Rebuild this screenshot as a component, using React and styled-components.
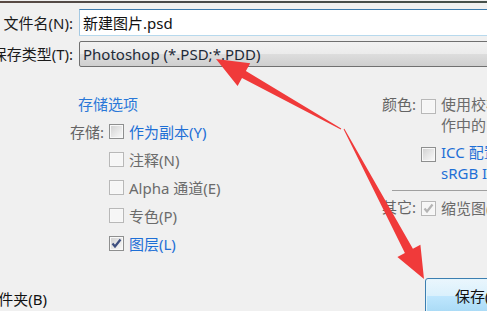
import React from 'react';
import styled, { createGlobalStyle } from 'styled-components';

const GlobalStyle = createGlobalStyle`
  html, body {
    margin: 0;
    padding: 0;
  }
  body {
    background: #f0f0f0;
    font-family: "Noto Sans", "Noto Sans CJK SC", sans-serif;
    font-size: 15px;
  }
`;

const Dialog = styled.div`
  position: relative;
  width: 487px;
  height: 311px;
  overflow: hidden;
  background: #f0f0f0;
  display: flex;
  flex-direction: column;
`;

const TopEdge = styled.div`
  height: 2px;
  margin-top: 1px;
  background: linear-gradient(to right, #5a4a44, #4a4a4a 30%, #46504a);
`;

const Fields = styled.div`
  display: flex;
  flex-direction: column;
  gap: 5px;
  margin-top: 6px;
`;

const FieldRow = styled.div`
  display: grid;
  grid-template-columns: 73px 420px;
  column-gap: 6px;
  align-items: center;
`;

const FieldLabel = styled.label`
  display: flex;
  justify-content: flex-end;
  white-space: nowrap;
  color: #1b1b1b;
  line-height: 20px;
`;

const TextBox = styled.div`
  box-sizing: border-box;
  height: 27px;
  padding: 0 3px;
  display: flex;
  align-items: center;
  background: #fff;
  border: 1px solid;
  border-color: #3d7bad #a4c9e3 #b7d9ed #a4c9e3;
  color: #111;
`;

const ComboBox = styled.div`
  box-sizing: border-box;
  height: 26px;
  padding: 0 3px;
  display: flex;
  align-items: center;
  border: 1px solid #707070;
  border-radius: 2px;
  background: linear-gradient(#f2f2f2 0%, #ebebeb 50%, #dddddd 50%, #cfcfcf 100%);
  color: #1e2a38;
  white-space: nowrap;
`;

const Options = styled.div`
  display: grid;
  grid-template-columns: 382px 1fr;
  margin-top: 27px;
`;

const LeftPanel = styled.div`
  display: flex;
  flex-direction: column;
`;

const GroupTitle = styled.div`
  padding-left: 78px;
  line-height: 20px;
  color: #2a78d8;
  margin-bottom: 3px;
`;

const OptionRow = styled.div`
  display: grid;
  grid-template-columns: 104px 15px auto;
  column-gap: 5px;
  align-items: center;
  height: 28px;
`;

const RowLabel = styled.span`
  display: flex;
  justify-content: flex-end;
  white-space: nowrap;
  color: #646464;
`;

const OptionText = styled.span`
  white-space: nowrap;
  color: ${(p) => (p.$active ? '#1e6fd6' : '#6b6b6b')};
  line-height: ${(p) => (p.$lines ? '21px' : 'normal')};
`;

const RightPanel = styled.div`
  display: flex;
  flex-direction: column;
`;

const SideRow = styled.div`
  display: grid;
  grid-template-columns: 34px 15px auto;
  column-gap: 5px;
  align-items: start;
  line-height: 21px;
  & + & {
    margin-top: 6px;
  }
`;

const Divider = styled.div`
  height: 1px;
  margin: 6px 0 6px 10px;
  background: #a0a0a0;
`;

const Box = styled.span`
  box-sizing: border-box;
  width: 15px;
  height: 15px;
  margin-top: ${(p) => p.$offset || 0}px;
  display: flex;
  align-items: center;
  justify-content: center;
  border: 1px solid ${(p) => (p.$disabled ? '#b8b8b8' : '#8e8f8f')};
  box-shadow: inset 0 0 0 1px #f8f8f8;
  background: ${(p) =>
    p.$disabled
      ? '#f6f6f6'
      : 'linear-gradient(135deg, #cfcfcf 0%, #e6e6e6 50%, #fbfbfb 100%)'};
  svg {
    display: block;
  }
`;

const Footer = styled.div`
  margin-top: auto;
  margin-bottom: -4px;
  height: 37px;
  display: flex;
  justify-content: space-between;
  align-items: center;
`;

const FooterLabel = styled.span`
  width: 47px;
  display: flex;
  justify-content: flex-end;
  white-space: nowrap;
  color: #111;
  padding-top: 4px;
`;

const SaveButton = styled.button`
  box-sizing: border-box;
  width: 90px;
  height: 37px;
  margin-right: -28px;
  padding: 0 0 2px 0;
  border: 1px solid #3c7fb1;
  border-radius: 3px;
  box-shadow: inset 0 0 0 1px #e4f5fc;
  background: linear-gradient(#eaf6fd 0%, #d9f0fc 50%, #bee6fd 50%, #a7d9f5 100%);
  font-family: inherit;
  font-size: 15px;
  color: #111;
  text-align: left;
  padding-left: 29px;
`;

const Overlay = styled.svg`
  position: absolute;
  left: 0;
  top: 0;
  pointer-events: none;
`;

function Check({ checked, disabled, offset }) {
  return (
    <Box $disabled={disabled} $offset={offset}>
      {checked && (
        <svg width="11" height="11" viewBox="0 0 11 11">
          <path
            d="M1.5 5.5 L4 8.5 L9.5 1.5"
            fill="none"
            stroke={disabled ? '#b4b4b4' : '#3e4f80'}
            strokeWidth="2.2"
          />
        </svg>
      )}
    </Box>
  );
}

const saveOptions = [
  { label: '存储:', text: '作为副本(Y)', active: true },
  { text: '注释(N)', disabled: true },
  { text: 'Alpha 通道(E)', disabled: true },
  { text: '专色(P)', disabled: true },
  { text: '图层(L)', active: true, checked: true },
];

export default function App() {
  return (
    <>
      <GlobalStyle />
      <Dialog>
        <TopEdge />
        <Fields>
          <FieldRow>
            <FieldLabel>文件名(N):</FieldLabel>
            <TextBox>新建图片.psd</TextBox>
          </FieldRow>
          <FieldRow>
            <FieldLabel>保存类型(T):</FieldLabel>
            <ComboBox>Photoshop (*.PSD;*.PDD)</ComboBox>
          </FieldRow>
        </Fields>

        <Options>
          <LeftPanel>
            <GroupTitle>存储选项</GroupTitle>
            {saveOptions.map((o) => (
              <OptionRow key={o.text}>
                <RowLabel>{o.label}</RowLabel>
                <Check checked={o.checked} disabled={o.disabled} />
                <OptionText $active={o.active}>{o.text}</OptionText>
              </OptionRow>
            ))}
          </LeftPanel>

          <RightPanel>
            <SideRow>
              <RowLabel>颜色:</RowLabel>
              <Check disabled offset={5} />
              <OptionText $lines>
                使用校样设置
                <br />
                作中的 CMYK
              </OptionText>
            </SideRow>
            <SideRow>
              <span />
              <Check offset={5} />
              <OptionText $active $lines>
                ICC 配置文件(C):
                <br />
                sRGB IEC61966-2.1
              </OptionText>
            </SideRow>
            <Divider />
            <SideRow>
              <RowLabel>其它:</RowLabel>
              <Check checked disabled offset={4} />
              <OptionText>缩览图(T)</OptionText>
            </SideRow>
          </RightPanel>
        </Options>

        <Footer>
          <FooterLabel>新建文件夹(B)</FooterLabel>
          <SaveButton>保存(S)</SaveButton>
        </Footer>

        <Overlay width="487" height="311" viewBox="0 0 487 311">
          <polygon
            fill="#f03a3a"
            points="216,59 250.2,63.3 245.9,71.1 341.2,128.6 340.8,129.4 242,78.1 237.6,85.9"
          />
          <polygon
            fill="#f03a3a"
            points="424,279 397.4,256.9 404.9,252.9 343.6,129.2 344.4,128.8 412.9,248.7 420.4,244.7"
          />
        </Overlay>
      </Dialog>
    </>
  );
}
